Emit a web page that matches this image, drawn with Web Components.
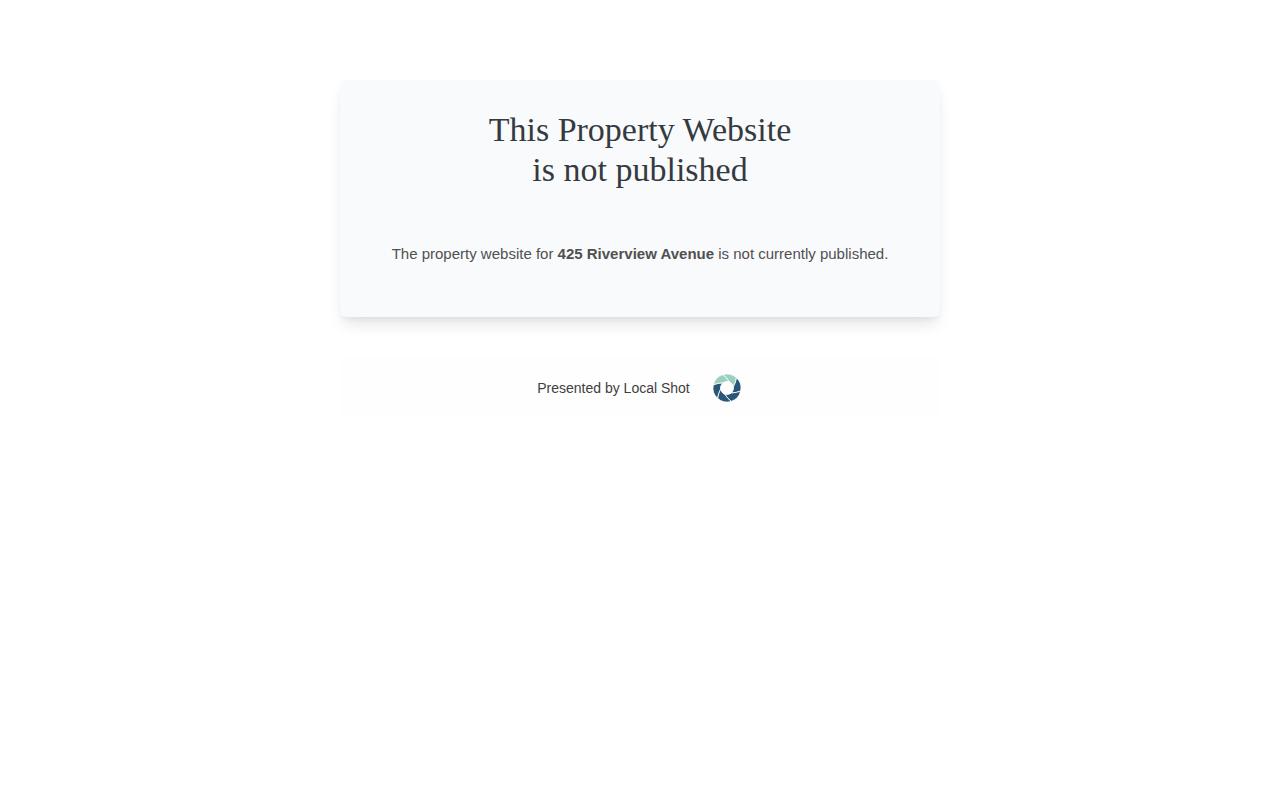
<!DOCTYPE html>
<html lang="en">
<head>
<meta charset="utf-8">
<meta name="viewport" content="width=device-width, initial-scale=1">
<title>Property Website</title>
<style>
  body { margin: 0; background: #fff; font-family: "Liberation Sans", Arial, sans-serif; }
</style>
</head>
<body>
<notice-page>
  <notice-card>
    <span slot="title">This Property Website<br>is not published</span>
    The property website for <strong>425 Riverview Avenue</strong> is not currently published.
  </notice-card>
  <presenter-bar>Presented by Local Shot</presenter-bar>
</notice-page>
<script>
  const define = (name, markup) => {
    const template = document.createElement('template');
    template.innerHTML = markup;
    customElements.define(name, class extends HTMLElement {
      constructor() {
        super();
        this.attachShadow({ mode: 'open' }).append(template.content.cloneNode(true));
      }
    });
  };

  define('notice-page', `
    <style>
      :host { display: block; padding: 80px 20px; }
      main { display: flex; flex-direction: column; gap: 40px; max-width: 600px; margin: 0 auto; }
    </style>
    <main><slot></slot></main>`);

  define('notice-card', `
    <style>
      :host {
        display: block; padding: 30px 40px 50px; text-align: center;
        background: #f9fafc; border-radius: 6px;
        box-shadow: 0 10px 15px -3px rgba(0,0,0,.1), 0 4px 6px -2px rgba(0,0,0,.05);
      }
      h1 {
        margin: 0 0 50px; color: #343a40;
        font: 400 34px/40px "Liberation Serif", "Times New Roman", serif;
      }
      p { margin: 0; color: #505050; font-size: 15px; line-height: 27px; }
    </style>
    <h1><slot name="title"></slot></h1>
    <p><slot></slot></p>`);

  define('shutter-logo', `
    <style>
      :host { display: block; width: 32px; height: 32px; }
      svg { display: block; width: 100%; height: 100%; }
    </style>
    <svg viewBox="12 12 96 96" aria-hidden="true">
      <defs>
        <clipPath id="disc"><circle cx="60" cy="60" r="42"/></clipPath>
        <path id="blade" d="M42 22Q53 28 63.5 40.1Q73 43 79 53.1Q84 40 83.9 25.4A42 42 0 0 0 42 22Z"/>
      </defs>
      <g clip-path="url(#disc)" stroke="#fefefe" stroke-width="2.4">
        <g fill="#9bcfbf">
          <use href="#blade" transform="rotate(8 60 60)"/>
          <use href="#blade" transform="rotate(308 60 60)"/>
        </g>
        <g fill="#2a5678">
          <use href="#blade" transform="rotate(68 60 60)"/>
          <use href="#blade" transform="rotate(128 60 60)"/>
          <use href="#blade" transform="rotate(188 60 60)"/>
          <use href="#blade" transform="rotate(248 60 60)"/>
        </g>
      </g>
    </svg>`);

  define('presenter-bar', `
    <style>
      :host { display: block; }
      footer {
        display: flex; align-items: center; justify-content: center; gap: 21px;
        padding: 15px 16px 13px; background: #fefefe; color: #404040; font-size: 14px; line-height: 28px;
      }
    </style>
    <footer><span><slot></slot></span><shutter-logo></shutter-logo></footer>`);
</script>
</body>
</html>
